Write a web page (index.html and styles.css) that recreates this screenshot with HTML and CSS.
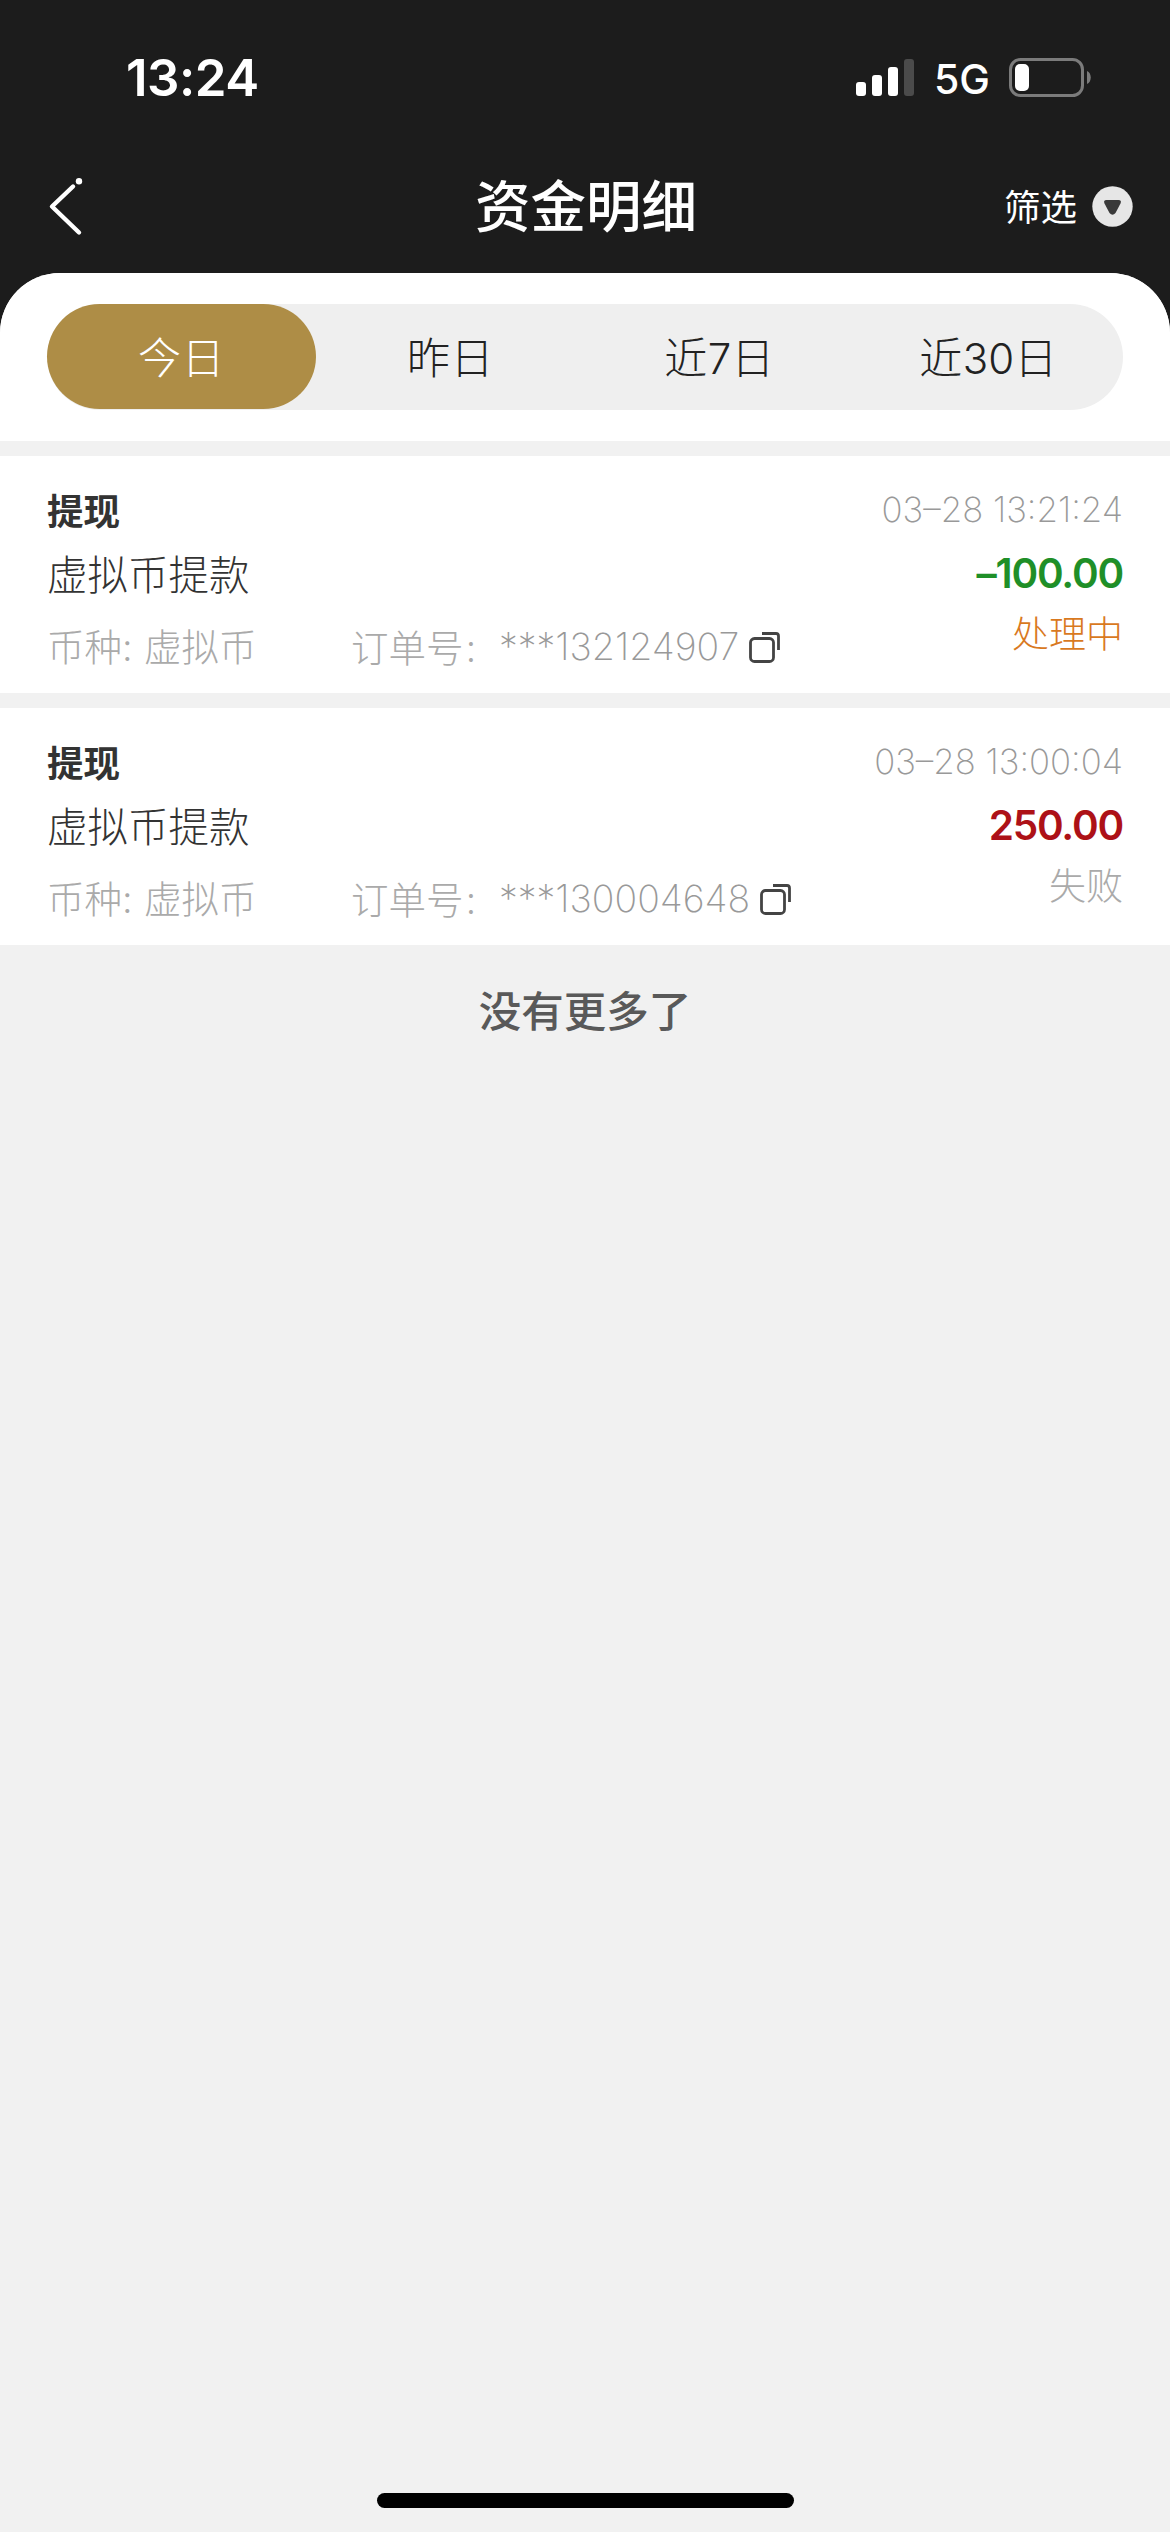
FILE: index.html
```html
<!DOCTYPE html>
<html lang="zh-CN">
<head>
<meta charset="utf-8">
<title>资金明细</title>
<link rel="stylesheet" href="styles.css">
</head>
<body>
<div class="screen">
  <header class="top">
    <div class="status">
      <span class="clock">13:24</span>
      <div class="indicators">
        <svg class="signal" width="58" height="37" viewBox="0 0 58 37">
          <rect x="0" y="23" width="10" height="14" rx="3" fill="#fff"/>
          <rect x="16" y="16" width="10" height="21" rx="3" fill="#fff"/>
          <rect x="32" y="8" width="10" height="29" rx="3" fill="#fff"/>
          <rect x="48" y="0" width="10" height="37" rx="3" fill="#4b4b4b"/>
        </svg>
        <span class="network">5G</span>
        <svg class="battery" width="82" height="39" viewBox="0 0 82 39">
          <rect x="1.5" y="1.5" width="72" height="36" rx="10" fill="none" stroke="#7b7b7b" stroke-width="3"/>
          <rect x="6" y="6" width="14" height="27" rx="5" fill="#fff"/>
          <path d="M78 13c5 2 5 11 0 13z" fill="#7b7b7b"/>
        </svg>
      </div>
    </div>
    <nav class="nav">
      <svg class="back" width="36" height="58" viewBox="0 0 36 58" fill="none" stroke="#fff" stroke-width="4.400" stroke-linecap="round" stroke-linejoin="round">
        <path d="M26 8.500L5 28.500l27 26"/><circle cx="32" cy="3.200" r="3.200" fill="#fff" stroke="none"/>
      </svg>
      <h1 class="title">资金明细</h1>
      <div class="filter">
        <span>筛选</span>
        <svg width="41" height="41" viewBox="0 0 41 41"><circle cx="20.5" cy="20.5" r="20.2" fill="#e6e6e6"/><path d="M14.500 14h12q3.500 0 2 3.500l-5 9.500q-3 3.500-6 0l-5-9.500q-1.500-3.500 2-3.500z" fill="#3a3a3a"/></svg>
      </div>
    </nav>
  </header>
  <main class="sheet">
    <div class="tabs-wrap">
      <div class="tabs">
        <span class="tab active">今日</span>
        <span class="tab">昨日</span>
        <span class="tab">近<b class="num">7</b>日</span>
        <span class="tab">近<b class="num">30</b>日</span>
      </div>
    </div>
    <section class="record">
      <div class="left">
        <div class="type">提现</div>
        <div class="desc">虚拟币提款</div>
        <div class="meta"><span class="coin">币种<span class="num colon">:</span>虚拟币</span><span class="label">订单号<span class="wide">:</span></span><span class="order num">***132124907</span>
          <svg class="copy" width="31" height="31" viewBox="0 0 31 31" fill="none" stroke="#444" stroke-width="2.800"><rect x="1.500" y="6.500" width="23" height="23" rx="4"/><path d="M13 1.500h14q2.500 0 2.500 2.500v14"/></svg>
        </div>
      </div>
      <div class="right">
        <div class="date num">03–28 13:21:24</div>
        <div class="amount green num">–100.00</div>
        <div class="state pending">处理中</div>
      </div>
    </section>
    <section class="record">
      <div class="left">
        <div class="type">提现</div>
        <div class="desc">虚拟币提款</div>
        <div class="meta"><span class="coin">币种<span class="num colon">:</span>虚拟币</span><span class="label">订单号<span class="wide">:</span></span><span class="order num">***130004648</span>
          <svg class="copy" width="31" height="31" viewBox="0 0 31 31" fill="none" stroke="#444" stroke-width="2.800"><rect x="1.500" y="6.500" width="23" height="23" rx="4"/><path d="M13 1.500h14q2.500 0 2.500 2.500v14"/></svg>
        </div>
      </div>
      <div class="right">
        <div class="date num">03–28 13:00:04</div>
        <div class="amount red num">250.00</div>
        <div class="state">失败</div>
      </div>
    </section>
    <p class="end">没有更多了</p>
  </main>
  <div class="home"></div>
</div>
</body>
</html>
```
FILE: styles.css
```css
* { box-sizing: border-box; margin: 0; padding: 0; }
body { background: #f1f1f1; font-family: "Noto Sans CJK SC", sans-serif; color: #333; }
svg { display: block; flex: none; }
.num { font-family: Inter, "Liberation Sans", sans-serif; font-weight: inherit; }
.screen { width: 1170px; height: 2532px; display: flex; flex-direction: column; background: linear-gradient(#1c1c1c 400px, #f1f1f1 400px); }
.top { height: 273px; flex: none; color: #fff; }
.status { height: 156px; display: flex; justify-content: space-between; padding: 0 79px 0 126px; }
.clock { font: 600 51px/60px Inter, sans-serif; margin-top: 48px; letter-spacing: -0.5px; }
.indicators { display: flex; height: 39px; margin-top: 58px; }
.signal { margin-top: 1px; }
.network { font: 500 41px/43px Inter, sans-serif; width: 95px; padding-left: 20px; }
.nav { height: 100px; display: grid; grid-template-columns: 1fr auto 1fr; align-items: center; padding: 0 37px 0 47px; }
.back { margin-top: 2px; }
.title { font-size: 55.500px; line-height: 80px; font-weight: 500; margin: -7px 8px 0 0; }
.filter { display: flex; align-items: center; justify-content: flex-end; gap: 15px; font-size: 36.500px; line-height: 50px; }
.sheet { background: #f1f1f1; border-radius: 60px 60px 0 0; flex: 1; }
.tabs-wrap { height: 168px; background: #fff; border-radius: 60px 60px 0 0; padding: 31px 47px; }
.tabs { display: grid; grid-template-columns: repeat(4, 1fr); height: 106px; border-radius: 53px; background: #efefef; }
.tab { height: 105px; font-size: 43px; line-height: 102px; font-weight: 300; text-align: center; color: #222; letter-spacing: 0.6px; border-radius: 53px; }
.tab .num { font-size: 42px; letter-spacing: 0; }
.active { background: #ae8d46; color: #fff; }
.record { display: flex; justify-content: space-between; height: 237px; margin-top: 15px; background: #fff; padding: 24px 47px 0; }
.type { font-size: 36.500px; line-height: 59px; font-weight: 700; }
.desc { font-size: 40.500px; line-height: 68px; font-weight: 300; }
.meta { display: flex; align-items: center; height: 78px; font-size: 37.500px; line-height: 78px; font-weight: 300; color: #aaa; white-space: nowrap; }
.coin { width: 304px; }
.colon { display: inline-block; width: 22px; }
.wide { display: inline-block; width: 12px; text-align: right; }
.label { width: 148px; }
.order { font-weight: 200; color: #999; padding-top: 2px; }
.copy { margin: 2px 0 0 10px; }
.right { text-align: right; }
.date { font-size: 34.800px; line-height: 59px; font-weight: 200; color: #999; }
.amount { font-size: 40.500px; line-height: 70px; font-weight: 600; letter-spacing: -1.200px; }
.green { color: #1f8f28; }
.red { color: #ad1117; }
.state { font-size: 37px; line-height: 47px; font-weight: 300; color: #aaa; }
.pending { color: #d9791f; }
.end { text-align: center; font-size: 42.500px; line-height: 64px; margin-top: 32px; font-weight: 500; color: #595959; }
.home { width: 417px; height: 15px; border-radius: 8px; background: #000; margin: 0 auto 24px; flex: none; }
```
